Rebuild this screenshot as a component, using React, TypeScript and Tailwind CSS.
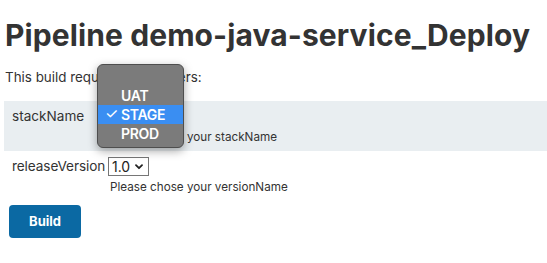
import { useState } from 'react';

const options = ['', 'UAT', 'STAGE', 'PROD'];

function Chevron() {
  return (
    <svg className="w-[8px] h-[6px] ml-[5px]" viewBox="0 0 8 6" fill="none">
      <path d="M1 1.2l3 3 3-3" stroke="#222" strokeWidth={1.8} strokeLinecap="round" strokeLinejoin="round" />
    </svg>
  );
}

function FakeSelect({ value }: { value: string }) {
  return (
    <div className="h-[19px] flex items-center border border-[#767676] bg-white pl-[3px] pr-[5px] text-[14px] leading-none text-[#222]">
      <span>{value}</span>
      <Chevron />
    </div>
  );
}

export default function App() {
  const [stack] = useState('STAGE');

  return (
    <div className="min-h-screen bg-white text-[#333] font-['Inter','Liberation_Sans',sans-serif] pl-[4px]">
      <h1 className="pt-[17px] pl-[1px] text-[30px] leading-[36px] font-bold tracking-[0.1px]">
        Pipeline demo-java-service_Deploy
      </h1>
      <p className="mt-[14px] pl-[1px] text-[13.4px] leading-[20px]">This build requires parameters:</p>

      <div className="mt-[14px]">
        {/* stackName */}
        <div className="flex bg-[#e9eef1] pt-[5px] pb-[6px]">
          <div className="w-[104px] shrink-0 pl-[8px] text-[13.6px] leading-[20px] -mt-[0.5px]">stackName</div>
          <div className="flex flex-col items-start">
            <div className="relative">
              <FakeSelect value={stack} />
              {/* open dropdown menu */}
              <div className="absolute left-[-11px] top-[-42px] w-[87px] rounded-[6px] border border-[#4e4e4e] bg-[#7b7b7b] pt-[2px] pb-[4px] shadow-[0_3px_10px_rgba(0,0,0,0.35)] z-10">
                {options.map((o) => (
                  <div
                    key={o || 'empty'}
                    className={`h-[19px] flex items-center text-[14px] font-semibold tracking-[-0.3px] text-white ${
                      o === stack ? 'bg-[#3a8ef2]' : ''
                    }`}
                  >
                    <span className="w-[23px] pl-[7px] text-[15px] font-normal">{o === stack ? '✓' : ''}</span>
                    <span>{o}</span>
                  </div>
                ))}
              </div>
            </div>
            <div className="mt-[4px] pl-[2px] text-[11.7px] leading-[16px]">Please chose your stackName</div>
          </div>
        </div>

        {/* releaseVersion */}
        <div className="flex pt-[6px]">
          <div className="w-[104px] shrink-0 pl-[8px] text-[13.6px] leading-[20px] tracking-[-0.1px] -mt-[1px] whitespace-nowrap">releaseVersion</div>
          <div className="flex flex-col items-start">
            <FakeSelect value="1.0" />
            <div className="mt-[3px] pl-[2px] text-[11.7px] leading-[16px]">Please chose your versionName</div>
          </div>
        </div>
      </div>

      <button className="mt-[10px] ml-[5px] w-[72px] h-[33px] rounded-[4px] bg-[#0b69a3] text-white text-[13px] font-bold">
        Build
      </button>
    </div>
  );
}
